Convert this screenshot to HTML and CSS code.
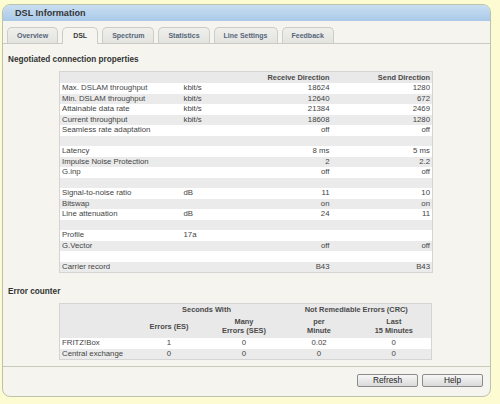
FILE: index.html
```html
<!DOCTYPE html>
<html lang="en">

<head>
    <meta charset="UTF-8">
    <title>DSL Information</title>
    <link rel="stylesheet" href="styles.css">
</head>

<body>
    <div class="panel">
        <div class="titlebar">DSL Information</div>

        <ul class="tabs">
            <li class="tab">Overview</li>
            <li class="tab active">DSL</li>
            <li class="tab">Spectrum</li>
            <li class="tab">Statistics</li>
            <li class="tab">Line Settings</li>
            <li class="tab">Feedback</li>
        </ul>

        <div class="page">
            <h2>Negotiated connection properties</h2>
            <table class="grid props">
                <colgroup>
                    <col class="c-label">
                    <col class="c-unit">
                    <col class="c-recv">
                    <col class="c-send">
                </colgroup>
                <thead>
                    <tr>
                        <th></th>
                        <th></th>
                        <th class="num">Receive Direction</th>
                        <th class="num">Send Direction</th>
                    </tr>
                </thead>
                <tbody>
                    <tr><td>Max. DSLAM throughput</td><td>kbit/s</td><td class="num">18624</td><td class="num">1280</td></tr>
                    <tr><td>Min. DSLAM throughput</td><td>kbit/s</td><td class="num">12640</td><td class="num">672</td></tr>
                    <tr><td>Attainable data rate</td><td>kbit/s</td><td class="num">21384</td><td class="num">2469</td></tr>
                    <tr><td>Current throughput</td><td>kbit/s</td><td class="num">18608</td><td class="num">1280</td></tr>
                    <tr><td>Seamless rate adaptation</td><td></td><td class="num">off</td><td class="num">off</td></tr>
                    <tr><td></td><td></td><td></td><td></td></tr>
                    <tr><td>Latency</td><td></td><td class="num">8 ms</td><td class="num">5 ms</td></tr>
                    <tr><td>Impulse Noise Protection</td><td></td><td class="num">2</td><td class="num">2.2</td></tr>
                    <tr><td>G.inp</td><td></td><td class="num">off</td><td class="num">off</td></tr>
                    <tr><td></td><td></td><td></td><td></td></tr>
                    <tr><td>Signal-to-noise ratio</td><td>dB</td><td class="num">11</td><td class="num">10</td></tr>
                    <tr><td>Bitswap</td><td></td><td class="num">on</td><td class="num">on</td></tr>
                    <tr><td>Line attenuation</td><td>dB</td><td class="num">24</td><td class="num">11</td></tr>
                    <tr><td></td><td></td><td></td><td></td></tr>
                    <tr><td>Profile</td><td>17a</td><td></td><td></td></tr>
                    <tr><td>G.Vector</td><td></td><td class="num">off</td><td class="num">off</td></tr>
                    <tr><td></td><td></td><td></td><td></td></tr>
                    <tr><td>Carrier record</td><td></td><td class="num">B43</td><td class="num">B43</td></tr>
                </tbody>
            </table>

            <h2 class="second">Error counter</h2>
            <table class="grid errors">
                <colgroup>
                    <col class="e-label">
                    <col class="e-col">
                    <col class="e-col">
                    <col class="e-col">
                    <col class="e-col">
                </colgroup>
                <thead>
                    <tr class="top">
                        <th></th>
                        <th colspan="2">Seconds With</th>
                        <th colspan="2">Not Remediable Errors (CRC)</th>
                    </tr>
                    <tr class="sub">
                        <th></th>
                        <th>Errors (ES)</th>
                        <th>Many<br>Errors (SES)</th>
                        <th>per<br>Minute</th>
                        <th>Last<br>15 Minutes</th>
                    </tr>
                </thead>
                <tbody>
                    <tr><td>FRITZ!Box</td><td class="mid">1</td><td class="mid">0</td><td class="mid">0.02</td><td class="mid">0</td></tr>
                    <tr><td>Central exchange</td><td class="mid">0</td><td class="mid">0</td><td class="mid">0</td><td class="mid">0</td></tr>
                </tbody>
            </table>
        </div>

        <div class="actions">
            <button class="btn">Refresh</button>
            <button class="btn">Help</button>
        </div>
    </div>
</body>

</html>
```

FILE: styles.css
```css
body {
    margin: 0;
    padding: 0;
    background-color: #fdfbd1;
    font-family: "Liberation Sans", Arial, sans-serif;
    color: #3c3c3c;
}

.panel {
    box-sizing: border-box;
    width: 489px;
    margin: 4px 0 0 2px;
    border: 1px solid #bcc3ad;
    border-radius: 8px;
    background-color: #f5f4ef;
    overflow: hidden;
}

.titlebar {
    height: 16px;
    line-height: 17px;
    padding-left: 12px;
    font-size: 9.1px;
    font-weight: bold;
    color: #353535;
    background: linear-gradient(#c9def2, #a9c9e8);
}

/* tab strip */
.tabs {
    display: flex;
    align-items: flex-end;
    list-style: none;
    margin: 0;
    padding: 6px 0 0 4px;
    border-bottom: 1px solid #cbcbc5;
}

.tab {
    height: 15px;
    line-height: 15px;
    padding: 0 9px;
    margin-right: 4px;
    border: 1px solid #cdcdc7;
    border-bottom: none;
    border-radius: 5px 5px 0 0;
    background: linear-gradient(#efefec, #e3e3df);
    font-size: 7px;
    font-weight: bold;
    color: #55667a;
}

.tab.active {
    height: 16px;
    margin-bottom: -1px;
    padding: 0 10px;
    background: #f5f4ef;
    color: #3a3a3a;
}

.page {
    padding: 0 5px 6px 5px;
    border-bottom: 1px solid #c6ccb6;
}

h2 {
    margin: 10px 0 5px;
    line-height: 12px;
    font-size: 8.2px;
    font-weight: bold;
    color: #333;
}

h2.second {
    margin-top: 13px;
}

/* data tables */
.grid {
    margin-left: 51px;
    width: 373px;
    table-layout: fixed;
    border-collapse: collapse;
    border: 1px solid #d4d4d4;
    font-size: 7.8px;
    color: #444;
}

.grid th {
    font-size: 7.4px;
    font-weight: bold;
    color: #4a4a4a;
    background-color: #e9e9e9;
    padding: 0 2px;
}

.grid td {
    height: 10.5px;
    line-height: 10.5px;
    padding: 0 2px;
    white-space: nowrap;
}

.grid tbody tr:nth-child(odd) td {
    background-color: #fff;
}

.grid tbody tr:nth-child(even) td {
    background-color: #ebebeb;
}

.grid .num {
    text-align: right;
}

.grid .mid {
    text-align: center;
}

.props thead th {
    height: 11px;
    line-height: 11px;
}

.c-label {
    width: 122px;
}

.c-unit {
    width: 69px;
}

.c-recv {
    width: 81px;
}

.c-send {
    width: 101px;
}

.e-label {
    width: 72px;
}

.e-col {
    width: 75px;
}

.errors thead th {
    text-align: center;
}

.errors .top th {
    height: 11px;
    line-height: 11px;
}

.errors .sub th {
    height: 22px;
    line-height: 9px;
    padding-bottom: 1px;
}

/* bottom buttons */
.actions {
    display: flex;
    justify-content: flex-end;
    gap: 4px;
    padding: 7px 7px 9px 0;
}

.btn {
    width: 61px;
    height: 13px;
    padding: 0;
    border: 1px solid #8c8c8c;
    border-radius: 2px;
    background: linear-gradient(#f7f7f7, #d9d9d9);
    font-family: "Liberation Sans", Arial, sans-serif;
    font-size: 8.3px;
    line-height: 11px;
    color: #222;
}
```
